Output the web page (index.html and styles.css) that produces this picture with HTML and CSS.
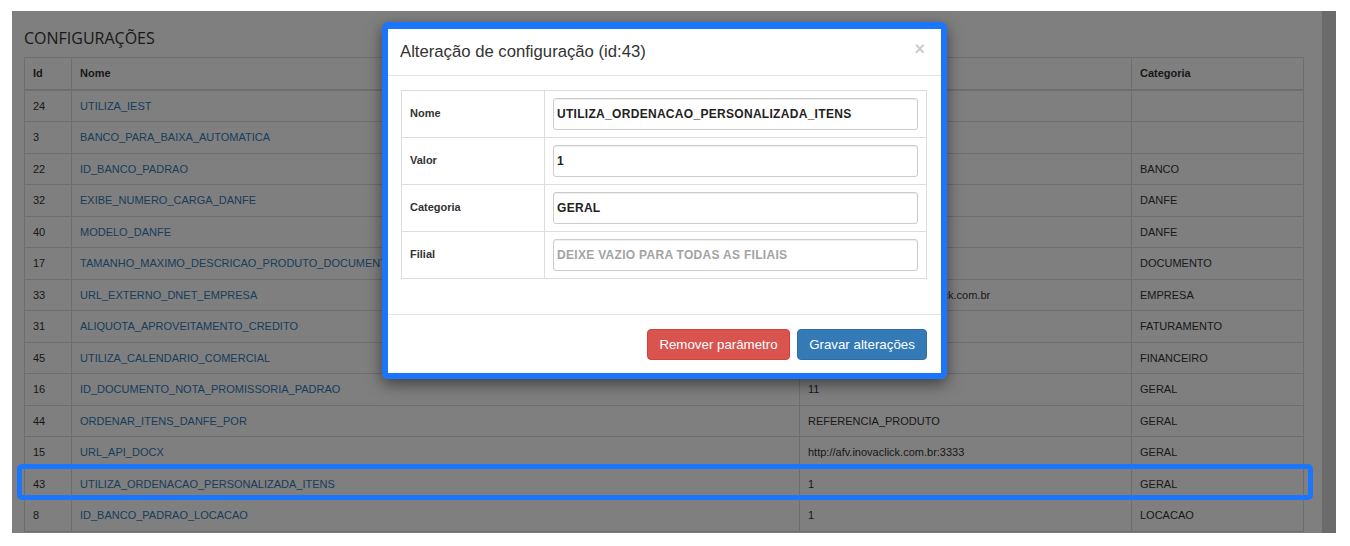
FILE: index.html
```html
<!DOCTYPE html>
<html lang="pt-BR">
<head>
<meta charset="utf-8">
<title>Configurações</title>
<link rel="stylesheet" href="styles.css">
</head>
<body>
<div class="screen">
  <div class="page">
    <h3 class="title">CONFIGURAÇÕES</h3>
    <table class="grid">
      <colgroup>
        <col class="c-id"><col class="c-nome"><col class="c-valor"><col class="c-cat">
      </colgroup>
      <thead>
        <tr><th>Id</th><th>Nome</th><th>Valor</th><th>Categoria</th></tr>
      </thead>
      <tbody>
        <tr><td>24</td><td><a>UTILIZA_IEST</a></td><td>N</td><td></td></tr>
        <tr><td>3</td><td><a>BANCO_PARA_BAIXA_AUTOMATICA</a></td><td>1</td><td></td></tr>
        <tr><td>22</td><td><a>ID_BANCO_PADRAO</a></td><td>1</td><td>BANCO</td></tr>
        <tr><td>32</td><td><a>EXIBE_NUMERO_CARGA_DANFE</a></td><td>S</td><td>DANFE</td></tr>
        <tr><td>40</td><td><a>MODELO_DANFE</a></td><td>1</td><td>DANFE</td></tr>
        <tr><td>17</td><td><a>TAMANHO_MAXIMO_DESCRICAO_PRODUTO_DOCUMENTO</a></td><td>120</td><td>DOCUMENTO</td></tr>
        <tr><td>33</td><td><a>URL_EXTERNO_DNET_EMPRESA</a></td><td>http://empresa.dnet.inovaclick.com.br</td><td>EMPRESA</td></tr>
        <tr><td>31</td><td><a>ALIQUOTA_APROVEITAMENTO_CREDITO</a></td><td>0</td><td>FATURAMENTO</td></tr>
        <tr><td>45</td><td><a>UTILIZA_CALENDARIO_COMERCIAL</a></td><td>1</td><td>FINANCEIRO</td></tr>
        <tr><td>16</td><td><a>ID_DOCUMENTO_NOTA_PROMISSORIA_PADRAO</a></td><td>11</td><td>GERAL</td></tr>
        <tr><td>44</td><td><a>ORDENAR_ITENS_DANFE_POR</a></td><td>REFERENCIA_PRODUTO</td><td>GERAL</td></tr>
        <tr><td>15</td><td><a>URL_API_DOCX</a></td><td>http://afv.inovaclick.com.br:3333</td><td>GERAL</td></tr>
        <tr><td>43</td><td><a>UTILIZA_ORDENACAO_PERSONALIZADA_ITENS</a></td><td>1</td><td>GERAL</td></tr>
        <tr><td>8</td><td><a>ID_BANCO_PADRAO_LOCACAO</a></td><td>1</td><td>LOCACAO</td></tr>
      </tbody>
    </table>
  </div>
  <div class="scrollbar"></div>

  <div class="backdrop"></div>
  <div class="row-mark"></div>

  <div class="modal-frame">
    <div class="modal">
      <div class="modal-header">
        <h4 class="modal-title">Alteração de configuração (id:43)</h4>
        <span class="close">×</span>
      </div>
      <div class="modal-body">
        <table class="form">
          <tr>
            <th>Nome</th>
            <td><input class="field" type="text" value="UTILIZA_ORDENACAO_PERSONALIZADA_ITENS"></td>
          </tr>
          <tr>
            <th>Valor</th>
            <td><input class="field" type="text" value="1"></td>
          </tr>
          <tr>
            <th>Categoria</th>
            <td><input class="field" type="text" value="GERAL"></td>
          </tr>
          <tr>
            <th>Filial</th>
            <td><input class="field" type="text" placeholder="DEIXE VAZIO PARA TODAS AS FILIAIS"></td>
          </tr>
        </table>
      </div>
      <div class="modal-footer">
        <button class="btn btn-danger">Remover parâmetro</button>
        <button class="btn btn-primary">Gravar alterações</button>
      </div>
    </div>
  </div>
</div>
</body>
</html>
```

FILE: styles.css
```css
html, body {
  margin: 0;
  padding: 0;
  background: #ffffff;
}

body {
  font-family: "Liberation Sans", Arial, sans-serif;
  color: #333333;
}

.screen {
  position: relative;
  margin: 11px 0 0 12px;
  width: 1324px;
  height: 522px;
  overflow: hidden;
  display: flex;
  background: #ffffff;
}

.page {
  flex: 1;
  padding: 17px 0 0 12px;
  background: #ffffff;
}

.scrollbar {
  width: 14px;
  background: #d6d6d6;
}

.title {
  margin: 0 0 9px 0;
  font-family: "Open Sans", "Liberation Sans", sans-serif;
  font-weight: 400;
  font-size: 16px;
  line-height: 20px;
  color: #333333;
}

.grid {
  width: 1279px;
  table-layout: fixed;
  border-collapse: collapse;
  font-size: 11px;
  line-height: 14.5px;
}

.c-id { width: 47px; }
.c-nome { width: 728px; }
.c-valor { width: 332px; }
.c-cat { width: 172px; }

.grid th,
.grid td {
  border: 1px solid #dddddd;
  padding: 8px 8px 8px 8px;
  text-align: left;
  white-space: nowrap;
  overflow: hidden;
}

.grid th {
  font-weight: bold;
  border-bottom: 2px solid #dddddd;
}

.grid a {
  color: #337ab7;
  text-decoration: none;
}

.backdrop {
  position: absolute;
  inset: 0;
  background: rgba(0, 0, 0, 0.5);
}

.row-mark {
  position: absolute;
  left: 5px;
  top: 453px;
  width: 1286px;
  height: 26px;
  border: 5px solid #1a75ff;
  border-radius: 5px;
}

.modal-frame {
  position: absolute;
  left: 370px;
  top: 11px;
  width: 553px;
  height: 344px;
  border: 6px solid #1a75ff;
  border-top-width: 7px;
  border-radius: 6px;
  box-shadow: 0 5px 15px rgba(0, 0, 0, 0.5);
}

.modal {
  width: 553px;
  height: 344px;
  background: #ffffff;
  display: flex;
  flex-direction: column;
}

.modal-header {
  display: flex;
  align-items: center;
  justify-content: space-between;
  padding: 14px 12px 14px 12px;
  border-bottom: 1px solid #e5e5e5;
}

.modal-title {
  margin: 0;
  font-size: 16.7px;
  line-height: 18px;
  font-weight: normal;
  color: #333333;
}

.close {
  font-size: 18px;
  line-height: 18px;
  font-weight: bold;
  color: #000000;
  opacity: 0.2;
  margin-right: 4px;
  margin-top: -6px;
}

.modal-body {
  padding: 14px 14px 13px 13px;
}

.form {
  width: 526px;
  border-collapse: collapse;
  margin-bottom: 20px;
}

.form th,
.form td {
  border: 1px solid #dddddd;
  vertical-align: middle;
}

.form th {
  width: 135px;
  padding: 0 0 2px 8px;
  text-align: left;
  font-size: 11px;
  font-weight: bold;
  color: #333333;
}

.form td {
  padding: 7px 8px 7px 8px;
}

.field {
  display: block;
  box-sizing: border-box;
  width: 365px;
  height: 32px;
  margin: 0;
  padding: 0 3px;
  border: 1px solid #cccccc;
  border-radius: 3px;
  box-shadow: inset 0 1px 1px rgba(0, 0, 0, 0.075);
  font-family: "Liberation Sans", Arial, sans-serif;
  font-size: 12px;
  font-weight: bold;
  letter-spacing: 0.3px;
  color: #222222;
  background: #ffffff;
}

.field::placeholder {
  color: #a3a3a3;
  opacity: 1;
}

.modal-footer {
  display: flex;
  justify-content: flex-end;
  gap: 7px;
  padding: 14px 14px 13px 14px;
  border-top: 1px solid #e5e5e5;
  margin-top: auto;
}

.btn {
  box-sizing: border-box;
  height: 31px;
  padding: 0;
  border-radius: 4px;
  font-family: "Liberation Sans", Arial, sans-serif;
  font-size: 13.3px;
  line-height: 17px;
  text-align: center;
  white-space: nowrap;
  color: #ffffff;
  border: 1px solid transparent;
}

.btn-danger {
  width: 143px;
  background: #d9534f;
  border-color: #d43f3a;
}

.btn-primary {
  width: 130px;
  background: #337ab7;
  border-color: #2e6da4;
}
```
